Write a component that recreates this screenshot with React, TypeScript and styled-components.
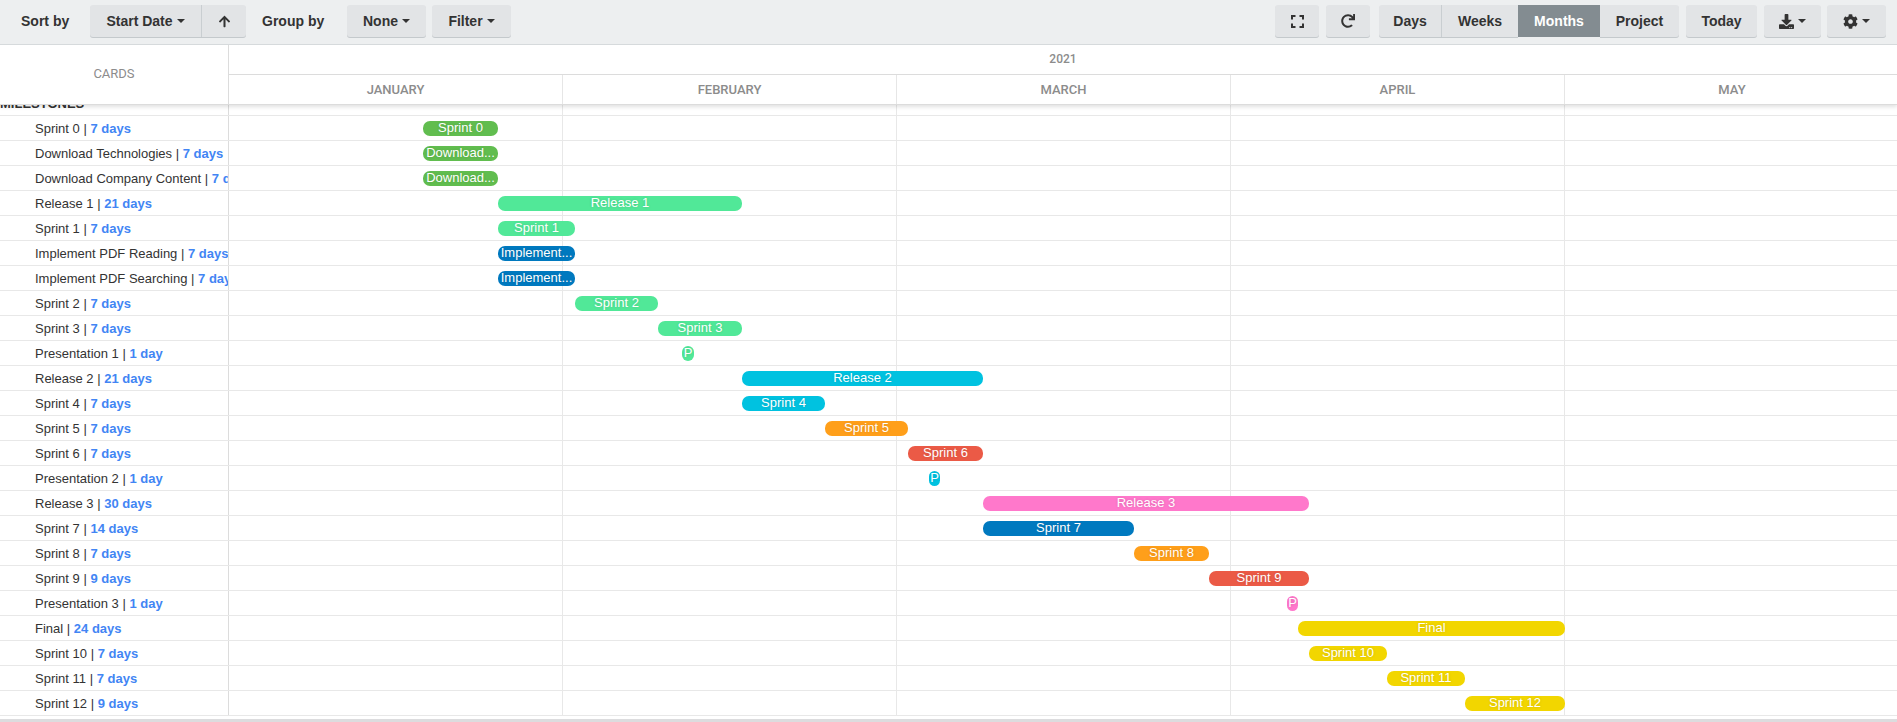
import React from 'react';
import styled, { createGlobalStyle } from 'styled-components';
import { FaArrowUp, FaCog, FaDownload, FaRedo } from 'react-icons/fa';

const palette = {
    green: '#61bd4f',
    lime: '#51e898',
    blue: '#0079bf',
    sky: '#00c2e0',
    orange: '#ff9f1a',
    red: '#eb5a46',
    pink: '#ff78cb',
    yellow: '#f2d600',
} as const;

type Colour = keyof typeof palette;

type Card = {
    name: string;
    days: number;
    colour: Colour;
    from: number; // page x of the bar's left edge
    to: number;
    label?: string;
};

const TIMELINE_X = 229;
const MONTHS = ['January', 'February', 'March', 'April', 'May'];

const cards: Card[] = [
    { name: 'Sprint 0', days: 7, colour: 'green', from: 423, to: 498 },
    { name: 'Download Technologies', days: 7, colour: 'green', from: 423, to: 498, label: 'Download...' },
    { name: 'Download Company Content', days: 7, colour: 'green', from: 423, to: 498, label: 'Download...' },
    { name: 'Release 1', days: 21, colour: 'lime', from: 498, to: 742 },
    { name: 'Sprint 1', days: 7, colour: 'lime', from: 498, to: 575 },
    { name: 'Implement PDF Reading', days: 7, colour: 'blue', from: 498, to: 575, label: 'Implement...' },
    { name: 'Implement PDF Searching', days: 7, colour: 'blue', from: 498, to: 575, label: 'Implement...' },
    { name: 'Sprint 2', days: 7, colour: 'lime', from: 575, to: 658 },
    { name: 'Sprint 3', days: 7, colour: 'lime', from: 658, to: 742 },
    { name: 'Presentation 1', days: 1, colour: 'lime', from: 682, to: 694, label: 'P' },
    { name: 'Release 2', days: 21, colour: 'sky', from: 742, to: 983 },
    { name: 'Sprint 4', days: 7, colour: 'sky', from: 742, to: 825 },
    { name: 'Sprint 5', days: 7, colour: 'orange', from: 825, to: 908 },
    { name: 'Sprint 6', days: 7, colour: 'red', from: 908, to: 983 },
    { name: 'Presentation 2', days: 1, colour: 'sky', from: 929, to: 940, label: 'P' },
    { name: 'Release 3', days: 30, colour: 'pink', from: 983, to: 1309 },
    { name: 'Sprint 7', days: 14, colour: 'blue', from: 983, to: 1134 },
    { name: 'Sprint 8', days: 7, colour: 'orange', from: 1134, to: 1209 },
    { name: 'Sprint 9', days: 9, colour: 'red', from: 1209, to: 1309 },
    { name: 'Presentation 3', days: 1, colour: 'pink', from: 1287, to: 1298, label: 'P' },
    { name: 'Final', days: 24, colour: 'yellow', from: 1298, to: 1565 },
    { name: 'Sprint 10', days: 7, colour: 'yellow', from: 1309, to: 1387 },
    { name: 'Sprint 11', days: 7, colour: 'yellow', from: 1387, to: 1465 },
    { name: 'Sprint 12', days: 9, colour: 'yellow', from: 1465, to: 1565 },
];

const GlobalStyle = createGlobalStyle`
    html, body {
        margin: 0;
        height: 100%;
        overflow: hidden;
        background: #fff;
    }
    body {
        font-family: 'Liberation Sans', Arial, sans-serif;
        font-size: 13px;
        color: #333;
    }
`;

const Page = styled.div`
    height: 722px;
    display: flex;
    flex-direction: column;
    overflow: hidden;
`;

const Toolbar = styled.div`
    flex: none;
    height: 45px;
    box-sizing: border-box;
    padding: 5px 11px 0 21px;
    display: flex;
    align-items: flex-start;
    background: #edeff0;
    border-bottom: 1px solid #d6dadc;
`;

const Label = styled.span<{ $width: number }>`
    width: ${({ $width }) => $width}px;
    flex: none;
    height: 32px;
    line-height: 32px;
    font-size: 14px;
    font-weight: 700;
    color: #333;
`;

const Group = styled.div<{ $gap?: number }>`
    display: flex;
    flex: none;
    margin-right: ${({ $gap }) => $gap ?? 0}px;
`;

const Button = styled.button<{ $width: number; $active?: boolean; $divider?: boolean }>`
    width: ${({ $width }) => $width}px;
    height: 32px;
    flex: none;
    padding: 0;
    display: flex;
    align-items: center;
    justify-content: center;
    gap: 4px;
    border: 0;
    border-right: ${({ $divider }) => ($divider ? '1px solid #c9ced1' : '0')};
    border-radius: 3px;
    background: ${({ $active }) => ($active ? '#838c91' : '#e2e4e6')};
    box-shadow: ${({ $active }) => ($active ? 'none' : '0 1px 0 #c4c9cc')};
    color: ${({ $active }) => ($active ? '#fff' : '#333')};
    font-family: 'Liberation Sans', Arial, sans-serif;
    font-size: 14px;
    font-weight: 700;

    ${Group} > &:not(:first-child) {
        border-top-left-radius: 0;
        border-bottom-left-radius: 0;
    }
    ${Group} > &:not(:last-child) {
        border-top-right-radius: 0;
        border-bottom-right-radius: 0;
    }
`;

const Caret = styled.span`
    width: 0;
    height: 0;
    border-left: 4px solid transparent;
    border-right: 4px solid transparent;
    border-top: 4px solid currentColor;
`;

const Spacer = styled.div`
    flex: 1;
`;

const Chart = styled.div`
    flex: 1;
    min-height: 0;
    overflow: hidden;
    border-bottom: 3px solid #dcdcde;
`;

const Header = styled.div`
    position: relative;
    z-index: 2;
    height: 60px;
    display: grid;
    grid-template-columns: 229px 1fr;
    background: #fff;
    border-bottom: 1px solid #dcdcdc;
    box-sizing: border-box;
    box-shadow: 0 2px 4px rgba(0, 0, 0, 0.12);
`;

const CardsHead = styled.div`
    display: flex;
    align-items: center;
    justify-content: center;
    padding-bottom: 3px;
    border-right: 1px solid #dcdcdc;
    font-family: Roboto, sans-serif;
    font-size: 13px;
    color: #8c8c8c;
`;

const TimeHead = styled.div`
    display: flex;
    flex-direction: column;
    min-width: 0;
`;

const Year = styled.div`
    height: 30px;
    box-sizing: border-box;
    line-height: 28px;
    text-align: center;
    border-bottom: 1px solid #dcdcdc;
    font-family: Roboto, sans-serif;
    font-size: 12px;
    font-weight: 500;
    color: #8c8c8c;
`;

const MonthRow = styled.div`
    flex: 1;
    display: flex;
`;

const Month = styled.div`
    width: 334px;
    flex: none;
    box-sizing: border-box;
    display: flex;
    align-items: center;
    justify-content: center;
    border-right: 1px solid #e6e6e6;
    font-family: Roboto, sans-serif;
    font-size: 13px;
    font-weight: 500;
    color: #8c8c8c;
    text-transform: uppercase;

    &:last-child {
        border-right: 0;
    }
`;

const Body = styled.div`
    margin-top: -14px;
`;

const Row = styled.div`
    height: 25px;
    box-sizing: border-box;
    display: grid;
    grid-template-columns: 229px 1fr;
    border-bottom: 1px solid #e8e8e8;
`;

const RowName = styled.div<{ $indent?: boolean }>`
    padding-left: ${({ $indent }) => ($indent ? 35 : 0)}px;
    line-height: 26px;
    white-space: nowrap;
    overflow: hidden;
    border-right: 1px solid #dcdcdc;
    color: #333;
`;

const GroupName = styled.strong`
    text-transform: uppercase;
`;

const Days = styled.b`
    color: #4285f4;
`;

const Track = styled.div`
    position: relative;
    background-image: repeating-linear-gradient(
        to right,
        transparent 0,
        transparent 333px,
        #e8e8e8 333px,
        #e8e8e8 334px
    );
`;

const Bar = styled.div<{ $colour: Colour }>`
    position: absolute;
    top: 5px;
    height: 15px;
    line-height: 14px;
    text-align: center;
    white-space: nowrap;
    overflow: hidden;
    border-radius: 7px;
    color: #fff;
    background: ${({ $colour }) => palette[$colour]};
    text-shadow: 0 0 3px rgba(0, 0, 0, 0.15);
`;

const FullscreenIcon = () => (
    <svg width="13" height="13" viewBox="0 0 13 13" fill="none" stroke="#333" strokeWidth="2">
        <path d="M1 4.5V1h3.5M8.5 1H12v3.5M12 8.5V12H8.5M4.5 12H1V8.5" />
    </svg>
);

export default function App() {
    return (
        <Page>
            <GlobalStyle />
            <Toolbar>
                <Label $width={69}>Sort by</Label>
                <Group $gap={16}>
                    <Button $width={112} $divider>
                        Start Date <Caret />
                    </Button>
                    <Button $width={44}>
                        <FaArrowUp size={13} />
                    </Button>
                </Group>
                <Label $width={85}>Group by</Label>
                <Group $gap={6}>
                    <Button $width={79}>
                        None <Caret />
                    </Button>
                </Group>
                <Group>
                    <Button $width={79}>
                        Filter <Caret />
                    </Button>
                </Group>
                <Spacer />
                <Group $gap={7}>
                    <Button $width={44}>
                        <FullscreenIcon />
                    </Button>
                </Group>
                <Group $gap={9}>
                    <Button $width={44}>
                        <FaRedo size={14} />
                    </Button>
                </Group>
                <Group $gap={7}>
                    <Button $width={63} $divider>
                        Days
                    </Button>
                    <Button $width={76}>Weeks</Button>
                    <Button $width={82} $active>
                        Months
                    </Button>
                    <Button $width={79}>Project</Button>
                </Group>
                <Group $gap={7}>
                    <Button $width={71}>Today</Button>
                </Group>
                <Group $gap={6}>
                    <Button $width={57}>
                        <FaDownload size={15} /> <Caret />
                    </Button>
                </Group>
                <Group>
                    <Button $width={59}>
                        <FaCog size={15} /> <Caret />
                    </Button>
                </Group>
            </Toolbar>
            <Chart>
                <Header>
                    <CardsHead>CARDS</CardsHead>
                    <TimeHead>
                        <Year>2021</Year>
                        <MonthRow>
                            {MONTHS.map((m) => (
                                <Month key={m}>{m}</Month>
                            ))}
                        </MonthRow>
                    </TimeHead>
                </Header>
                <Body>
                    <Row>
                        <RowName>
                            <GroupName>Milestones</GroupName>
                        </RowName>
                        <Track />
                    </Row>
                    {cards.map((c) => (
                        <Row key={c.name}>
                            <RowName $indent>
                                {c.name} | <Days>{c.days} {c.days === 1 ? 'day' : 'days'}</Days>
                            </RowName>
                            <Track>
                                <Bar
                                    $colour={c.colour}
                                    style={{ left: c.from - TIMELINE_X, width: c.to - c.from }}
                                >
                                    {c.label ?? c.name}
                                </Bar>
                            </Track>
                        </Row>
                    ))}
                </Body>
            </Chart>
        </Page>
    );
}
